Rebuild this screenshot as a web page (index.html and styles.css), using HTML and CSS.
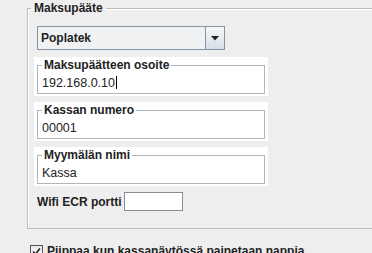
FILE: index.html
```html
<!DOCTYPE html>
<html lang="fi">
<head>
    <meta charset="UTF-8">
    <title>Maksupääte</title>
    <link rel="stylesheet" href="styles.css">
</head>
<body>
    <fieldset class="group">
        <legend>Maksupääte</legend>

        <div class="combo">
            <span class="combo-value">Poplatek</span>
            <span class="combo-btn">
                <svg width="8" height="5" viewBox="0 0 8 5"><path d="M0 0H8L4 4.5Z" fill="#222"/></svg>
            </span>
        </div>

        <div class="panel">
            <fieldset class="field">
                <legend>Maksupäätteen osoite</legend>
                <div class="value">192.168.0.10<span class="caret"></span></div>
            </fieldset>
        </div>

        <div class="panel">
            <fieldset class="field">
                <legend>Kassan numero</legend>
                <div class="value">00001</div>
            </fieldset>
        </div>

        <div class="panel">
            <fieldset class="field">
                <legend>Myymälän nimi</legend>
                <div class="value">Kassa</div>
            </fieldset>
        </div>

        <div class="row">
            <span class="label">Wifi ECR portti</span>
            <span class="small-input"></span>
        </div>
    </fieldset>

    <label class="check">
        <span class="box">
            <svg width="9" height="9" viewBox="0 0 9 9"><path d="M1 4.5L3.5 7L8 1.5" fill="none" stroke="#222" stroke-width="1.6"/></svg>
        </span>
        Piippaa kun kassanäytössä painetaan nappia
    </label>
</body>
</html>
```

FILE: styles.css
```css
body {
    margin: 0;
    background-color: #eeeeee;
    font-family: "Liberation Sans", Arial, sans-serif;
    font-size: 12px;
    color: #222;
    overflow: hidden;
}

/* outer group box, its right edge lies outside the window */
.group {
    box-sizing: border-box;
    width: 345px;
    margin: 1px 0 0 27px;
    padding: 10px 0 17px 6px;
    border: 1px solid #b5bec7;
    border-right: none;
    box-shadow: inset 1px 1px 0 #fff;
}
.group > legend {
    font-weight: bold;
    line-height: 15px;
    padding: 0 3px;
    margin-left: -3px;
}

/* combo box */
.combo {
    display: flex;
    width: 186px;
    height: 22px;
    margin-left: 3px;
    border: 1px solid #8595a6;
    background-color: #eff1f3;
}
.combo-value {
    flex: 1;
    padding-left: 3px;
    font-weight: bold;
    line-height: 22px;
}
.combo-btn {
    width: 18px;
    display: flex;
    align-items: center;
    justify-content: center;
    border-left: 1px solid #8595a6;
    background: linear-gradient(#f6f8fa, #d6dee7);
}

/* white panels with titled borders */
.panel {
    width: 228px;
    margin-top: 7px;
    padding: 1px 3px 2px;
    background-color: #fff;
}
.panel + .panel {
    margin-top: 6px;
}
.field {
    margin: 0;
    min-width: 0;
    padding: 0 4px;
    border: 1px solid #aeb6bf;
}
.field legend {
    font-weight: bold;
    line-height: 15px;
    padding: 0 2px;
}
.value {
    font-size: 12.5px;
    line-height: 20px;
    height: 20px;
}
.caret {
    display: inline-block;
    width: 1px;
    height: 13px;
    margin-left: 1px;
    vertical-align: -2px;
    background-color: #000;
}

/* port row */
.row {
    display: flex;
    align-items: center;
    gap: 2px;
    margin: 6px 0 0 3px;
    height: 19px;
}
.label {
    font-weight: bold;
}
.small-input {
    width: 57px;
    height: 17px;
    border: 1px solid #858d95;
    background-color: #fff;
}

/* checkbox */
.check {
    display: flex;
    align-items: center;
    gap: 4px;
    margin: 15px 0 0 30px;
    line-height: 15px;
    font-weight: bold;
}
.box {
    width: 11px;
    height: 11px;
    display: flex;
    align-items: center;
    justify-content: center;
    border: 1px solid #555;
    background: linear-gradient(#e8e8e8, #fff);
}
```
